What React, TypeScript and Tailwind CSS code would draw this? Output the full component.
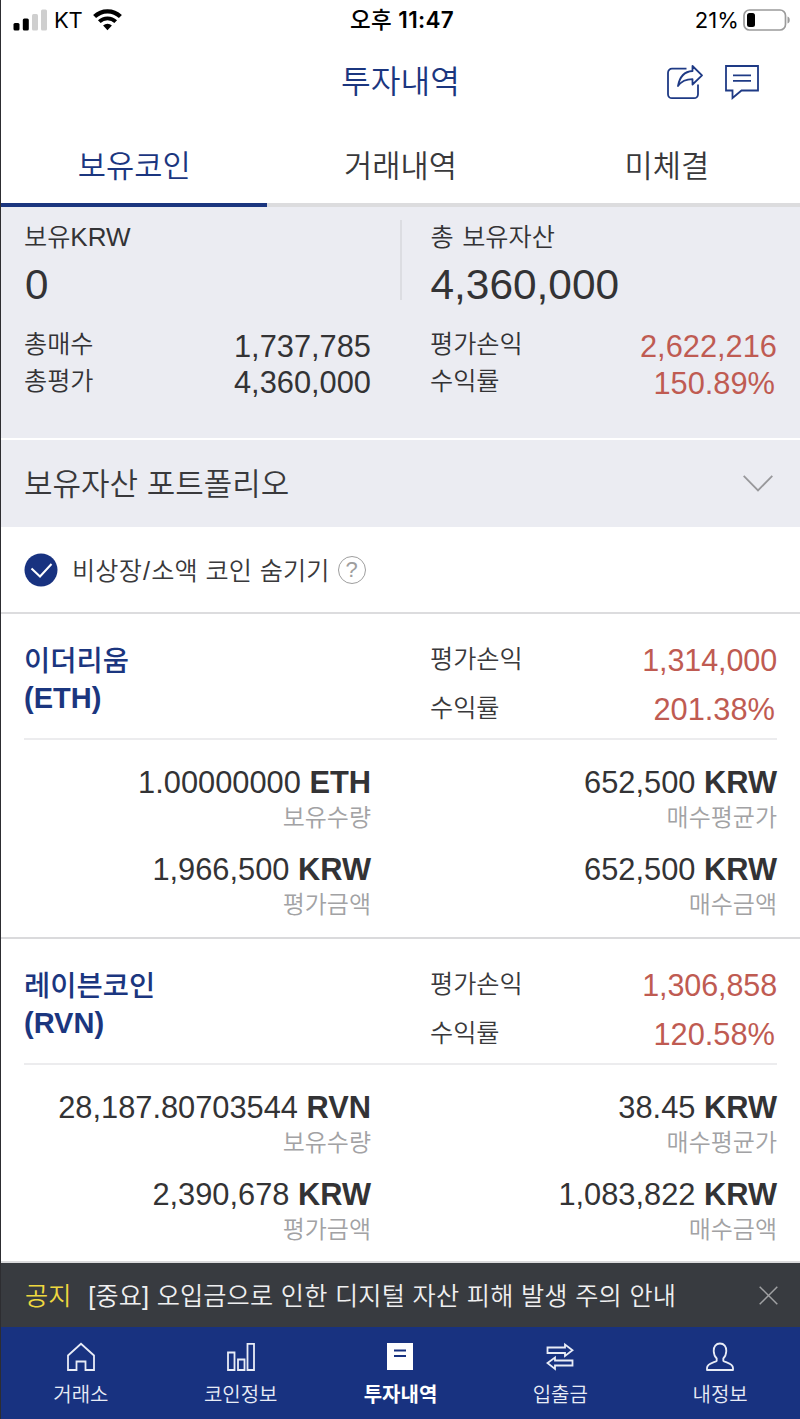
import type { ReactNode } from "react";

type Coin = {
  name: string;
  symbol: string;
  profit: string;
  rate: string;
  quantity: string;
  average: string;
  value: string;
  cost: string;
};

const coins: Coin[] = [
  {
    name: "이더리움",
    symbol: "ETH",
    profit: "1,314,000",
    rate: "201.38%",
    quantity: "1.00000000",
    average: "652,500",
    value: "1,966,500",
    cost: "652,500",
  },
  {
    name: "레이븐코인",
    symbol: "RVN",
    profit: "1,306,858",
    rate: "120.58%",
    quantity: "28,187.80703544",
    average: "38.45",
    value: "2,390,678",
    cost: "1,083,822",
  },
];

function StatusBar() {
  return (
    <div className="grid h-10 grid-cols-3 items-center pr-[9px] pl-3 font-['Inter','Noto_Sans_CJK_KR',sans-serif] text-[22px] leading-10 font-normal text-black">
      <div className="flex items-center">
        <svg width="34" height="22" viewBox="0 0 34 22">
          <rect x="0.5" y="14" width="6" height="7.5" rx="1.5" fill="#000" />
          <rect x="9.8" y="9.5" width="6" height="12" rx="1.5" fill="#000" />
          <rect x="19" y="5" width="6" height="16.5" rx="1.5" fill="#cfcfcf" />
          <rect x="28" y="0.5" width="6" height="21" rx="1.5" fill="#cfcfcf" />
        </svg>
        <span className="ml-[7px] tracking-[-0.2px]">KT</span>
        <svg className="ml-[10px]" width="29" height="22" viewBox="0 0 29 22">
          <path d="M1.6 7.6a18.3 18.3 0 0 1 25.8 0" fill="none" stroke="#000" strokeWidth="4.2" />
          <path d="M6.3 12.7a11.6 11.6 0 0 1 16.4 0" fill="none" stroke="#000" strokeWidth="3.8" />
          <path d="M14.5 21.3l-4.4-4.7a6.4 6.4 0 0 1 8.8 0z" fill="#000" />
        </svg>
      </div>
      <div className="text-center text-[22.5px] font-medium tracking-[0.3px] whitespace-nowrap">
        오후 <span className="font-semibold">11:47</span>
      </div>
      <div className="flex items-center justify-end">
        <span className="tracking-[0.1px]">21%</span>
        <svg className="ml-[4px]" width="48" height="22" viewBox="0 0 48 22">
          <rect x="1" y="1" width="41.5" height="20" rx="5.5" fill="none" stroke="#9b9b9b" strokeWidth="1.7" />
          <rect x="4" y="4" width="8" height="14" rx="2.5" fill="#000" />
          <path d="M44.5 7.5c3 .8 3 6.2 0 7z" fill="#9b9b9b" />
        </svg>
      </div>
    </div>
  );
}

function TitleBar() {
  return (
    <div className="grid h-[84px] grid-cols-[1fr_auto_1fr] items-center pr-[41px]">
      <div />
      <h1 className="ml-[41px] text-[32.3px] leading-[83px] text-[#1b367f]">투자내역</h1>
      <div className="flex items-center justify-end gap-[22px]">
        <svg width="36" height="35" viewBox="0 0 36 35" fill="none" stroke="#1e3a85" strokeWidth="1.8" strokeLinejoin="round">
          <path d="M19.5 3.7H5a4 4 0 0 0-4 4v21.500a4 4 0 0 0 4 4h22a4 4 0 0 0 4-4v-9.700" />
          <path d="M25.5 1l9.500 9.300-9.500 9.200v-5.300c-6 0-10.500 1.300-14.500 6.800 1.500-8.500 6-14.500 14.500-15z" />
        </svg>
        <svg width="34" height="35" viewBox="0 0 34 35" fill="none" stroke="#1e3a85" strokeWidth="1.8">
          <path d="M1 1h32v24.500H16.500l-9 7.500v-7.500H1z" />
          <path d="M8 10.300h18M8 15.800h18" />
        </svg>
      </div>
    </div>
  );
}

function Tabs() {
  return (
    <div className="grid h-[83px] grid-cols-3 text-center text-[30.7px] leading-[86px] text-[#39393b]">
      <div className="h-[83px] border-b-4 border-[#1b367f] text-[#1b367f]">보유코인</div>
      <div className="h-[83px] border-b-4 border-[#dcdcde]">거래내역</div>
      <div className="h-[83px] border-b-4 border-[#dcdcde]">미체결</div>
    </div>
  );
}

function Row({ label, value, className }: { label: string; value: string; className: string }) {
  return (
    <div className="flex h-[37px] justify-between">
      <span className="text-[25.2px] leading-[39px]">{label}</span>
      <span className={`text-[30.8px] ${className}`}>{value}</span>
    </div>
  );
}

function Summary() {
  return (
    <div className="h-[233px] border-b-2 border-white bg-[#ebecf2] px-[23px] pt-[13px]">
      <div className="grid grid-cols-2 text-[#333335]">
        <div className="h-[80px] w-[378px] border-r-2 border-[#dcdde2]">
          <div className="h-[34px] text-[25.2px] leading-[34px]">
            보유<span className="text-[26px]">KRW</span>
          </div>
          <div className="pl-px text-[42.2px] leading-[62px]">0</div>
        </div>
        <div className="ml-[30px]">
          <div className="h-[34px] text-[25.2px] leading-[34px] [word-spacing:1.5px]">총 보유자산</div>
          <div className="text-[42.4px] leading-[62px]">4,360,000</div>
        </div>
      </div>
      <div className="mt-[9px] grid grid-cols-2 gap-x-[59px] text-[#333335]">
        <div>
          <Row label="총매수" value="1,737,785" className="leading-[43px]" />
          <Row label="총평가" value="4,360,000" className="leading-[41px]" />
        </div>
        <div>
          <Row label="평가손익" value="2,622,216" className="leading-[43px] text-[#bf5b52]" />
          <Row label="수익률" value="150.89%" className="pr-0.5 leading-[43px] text-[#bf5b52]" />
        </div>
      </div>
    </div>
  );
}

function Portfolio() {
  return (
    <div className="flex h-[87px] items-center justify-between bg-[#ebecf2] pr-[27px] pl-[23px]">
      <span className="pt-[2px] text-[31px] leading-[85px] text-[#39393b]">보유자산 포트폴리오</span>
      <svg width="30" height="17" viewBox="0 0 30 17" fill="none" stroke="#98989b" strokeWidth="1.8">
        <path d="M0.7 0.8L15 15.5 29.3 0.8" />
      </svg>
    </div>
  );
}

function HideFilter() {
  return (
    <div className="flex h-[87px] items-center border-b-2 border-[#dcdcde] pl-[23px]">
      <svg width="34" height="34" viewBox="0 0 34 34">
        <circle cx="17" cy="17" r="16.5" fill="#183280" />
        <path d="M7.5 15.5l8.500 8 11.500-12.500" fill="none" stroke="#fff" strokeWidth="2" />
      </svg>
      <span className="ml-[14px] pt-[3px] text-[25.2px] leading-[82px] tracking-[0.15px] text-[#39393b] [word-spacing:0.5px]">
        비상장<span className="mx-px">/</span>소액 코인 숨기기
      </span>
      <span className="ml-[8px] flex h-[28px] w-[28px] items-center justify-center rounded-full border-[1.5px] border-[#9e9e9e] text-[22px] leading-none text-[#9e9e9e]">
        ?
      </span>
    </div>
  );
}

function Amount({ value, unit, label }: { value: string; unit: string; label: string }) {
  return (
    <div className="h-[87px] text-right">
      <div className="h-[36px] text-[30.8px] leading-[36px] text-[#333335]">
        {value} <span className="font-bold">{unit}</span>
      </div>
      <div className="text-[24px] leading-[34px] text-[#a2a2a4]">{label}</div>
    </div>
  );
}

function CoinCard({ coin }: { coin: Coin }) {
  return (
    <section className="h-[324.5px] border-b-2 border-[#dadadc] px-[23px]">
      <div className="grid h-[126px] grid-cols-2 gap-x-[59px] border-b-2 border-[#ececee]">
        <div className="pt-[29px] text-[28.5px] leading-[37px] text-[#1b367f]">
          <div className="h-[37px] font-medium">{coin.name}</div>
          <div className="text-[29px] font-bold">({coin.symbol})</div>
        </div>
        <div className="pt-[20px] text-[#39393b]">
          <div className="flex h-[49px] justify-between">
            <span className="text-[25.2px] leading-[51px]">평가손익</span>
            <span className="text-[30.5px] leading-[53px] tracking-[-0.1px] text-[#bf5b52]">{coin.profit}</span>
          </div>
          <div className="flex h-[49px] justify-between">
            <span className="text-[25.2px] leading-[51px]">수익률</span>
            <span className="pr-0.5 text-[30.8px] leading-[53px] text-[#bf5b52]">{coin.rate}</span>
          </div>
        </div>
      </div>
      <div className="grid grid-cols-2 gap-x-[59px] pt-[25px]">
        <Amount value={coin.quantity} unit={coin.symbol} label="보유수량" />
        <Amount value={coin.average} unit="KRW" label="매수평균가" />
        <Amount value={coin.value} unit="KRW" label="평가금액" />
        <Amount value={coin.cost} unit="KRW" label="매수금액" />
      </div>
    </section>
  );
}

function Notice() {
  return (
    <div className="flex h-[64px] items-center bg-[#383b40] pr-[22px] pl-[24px] text-[25.2px] leading-[62px]">
      <span className="pt-[2px] text-[#eed83f]">공지</span>
      <span className="ml-[17px] pt-[2px] tracking-[0.1px] text-[#efeff0] [word-spacing:0.6px]">
        [중요] 오입금으로 인한 디지털 자산 피해 발생 주의 안내
      </span>
      <svg className="ml-auto" width="19" height="19" viewBox="0 0 19 19" fill="none" stroke="#a0a1a3" strokeWidth="1.5">
        <path d="M0.7 0.7l17.600 17.600M18.300 0.7L0.7 18.300" />
      </svg>
    </div>
  );
}

function NavItem({ label, active = false, children }: { label: string; active?: boolean; children: ReactNode }) {
  return (
    <div className={active ? "flex flex-col items-center font-bold text-white" : "flex flex-col items-center text-[#e8ecf6]"}>
      <svg width="30" height="30" viewBox="0 0 30 30" fill="none" stroke="currentColor" strokeWidth="1.8">
        {children}
      </svg>
      <span className="mt-[8px] text-[20px] leading-[31px]">{label}</span>
    </div>
  );
}

function BottomNav() {
  return (
    <nav className="grid h-[92px] grid-cols-5 bg-[#183280] pt-[15px]">
      <NavItem label="거래소">
        <path d="M2 13.500L15 1.800 28 13.500V28h-8.500v-8.500h-9V28H2z" />
      </NavItem>
      <NavItem label="코인정보">
        <path d="M2 10.500h6.500V28H2zM12 17.500h6.500V28H12zM21.500 1.800H28V28h-6.500z" />
      </NavItem>
      <NavItem label="투자내역" active>
        <path d="M2 1h26v27H2z" fill="currentColor" stroke="none" />
        <path d="M9 8.500h12M9 14h12" stroke="#183280" strokeWidth="2" />
      </NavItem>
      <NavItem label="입출금">
        <path d="M2.500 5.500h17.500V2.600L27.500 8.300 20 14v-3H2.500zM27.500 18.500H10v-3L2.500 21 10 27v-3.500h17.500z" />
      </NavItem>
      <NavItem label="내정보">
        <path
          d="M15 1.500c-4 0-6.500 3-6.300 7.500.1 3 1.300 5.800 3 7.500v2.300c-1.500 1.500-9.700 2.200-9.700 7.200v2h26v-2c0-5-8.200-5.700-9.700-7.200v-2.300c1.700-1.700 2.900-4.500 3-7.500.2-4.500-2.300-7.500-6.300-7.500z"
          strokeLinejoin="round"
        />
      </NavItem>
    </nav>
  );
}

export default function App() {
  return (
    <div className="flex h-[1419px] w-[800px] flex-col overflow-hidden border-l border-[#2d2d31] bg-white font-['Liberation_Sans','Noto_Sans_CJK_KR',sans-serif] font-[350] whitespace-nowrap">
      <StatusBar />
      <TitleBar />
      <Tabs />
      <Summary />
      <Portfolio />
      <HideFilter />
      {coins.map((coin) => (
        <CoinCard key={coin.symbol} coin={coin} />
      ))}
      <Notice />
      <BottomNav />
    </div>
  );
}
